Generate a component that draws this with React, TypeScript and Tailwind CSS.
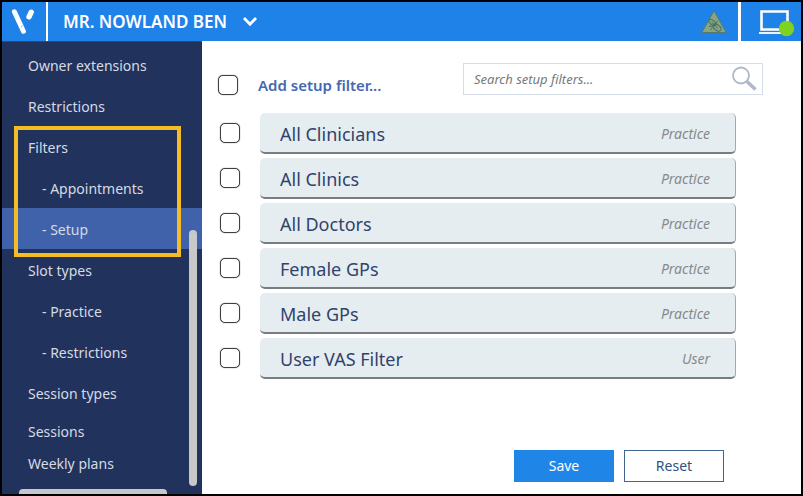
import clsx from 'clsx'

const menu = [
  {label: 'Owner extensions'},
  {label: 'Restrictions'},
  {label: 'Filters', group: true},
  {label: 'Slot types'},
  {label: '- Practice', sub: true},
  {label: '- Restrictions', sub: true},
  {label: 'Session types'},
  {label: 'Sessions', height: 'h-9'},
  {label: 'Weekly plans', height: 'h-7'},
]

const filters = [
  {name: 'All Clinicians', scope: 'Practice'},
  {name: 'All Clinics', scope: 'Practice'},
  {name: 'All Doctors', scope: 'Practice'},
  {name: 'Female GPs', scope: 'Practice'},
  {name: 'Male GPs', scope: 'Practice'},
  {name: 'User VAS Filter', scope: 'User'},
]

interface MenuLinkProps {
  label: string
  sub?: boolean
  active?: boolean
  height?: string
}

const MenuLink = ({label, sub, active, height = 'h-[41px]'}: MenuLinkProps) => (
  <a
    href="#"
    className={clsx(
      'flex items-center pt-0.5 whitespace-nowrap text-[#d5dae4]',
      height,
      sub ? 'pl-10' : 'pl-[26px]',
      active && 'bg-[#3f62ab]',
    )}
  >
    {label}
  </a>
)

const Checkbox = ({label}: {label: string}) => (
  <input
    type="checkbox"
    aria-label={label}
    className="size-5 shrink-0 appearance-none rounded-[5px] border border-[#404040] bg-white shadow-[0_0_1px_#404040] checked:bg-[#3f62ab]"
  />
)

const Header = () => (
  <header className="flex h-[39px] items-stretch bg-[#1f82e8] text-white">
    <div className="flex w-[46px] items-center border-r-2 border-white pl-2">
      <svg width="26" height="28" viewBox="0 0 26 28" fill="none" stroke="#fff" strokeLinecap="round">
        <path d="M4.4 3.8 13.4 23.2" strokeWidth="5" />
        <path d="M21.2 4.2 19 8.8" strokeWidth="5.4" />
        <path d="M11.3 18.8 13.6 17.2" stroke="#8dbdf2" strokeWidth="1" />
      </svg>
    </div>
    <button className="flex items-center gap-4 pl-[15px] text-[17px] font-semibold whitespace-nowrap">
      MR. NOWLAND BEN
      <svg width="14" height="11" viewBox="0 0 14 11" fill="none" stroke="#fff" strokeWidth="2.8">
        <path d="m1 2 6 6.3L13 2" />
      </svg>
    </button>
    <div className="ml-auto flex items-center border-r-3 border-white pr-[11px]">
      <svg width="26" height="24" viewBox="0 0 26 24" fill="none">
        <path d="M13 .8 25.2 22.5H.8Z" fill="#88a582" stroke="#57786f" strokeLinejoin="round" />
        <g stroke="#456c68" strokeWidth="1">
          <ellipse cx="11.3" cy="12.5" rx="4" ry="2.2" transform="rotate(40 11.3 12.5)" />
          <ellipse cx="16" cy="17.5" rx="4.6" ry="2.7" transform="rotate(40 16 17.5)" />
          <path d="m10.5 12 6.5 6.3M8 16.5l3.5-.5M9.5 20l2-2.5M15 13.5l1.5-2.5" />
        </g>
      </svg>
    </div>
    <div className="flex w-[60px] items-center pl-4">
      <svg width="40" height="30" viewBox="0 0 40 30" fill="none">
        <path d="M4.5 4.5h26v18h-26z" stroke="#fff" strokeWidth="2.6" />
        <path d="M2 26h29" stroke="#fff" strokeWidth="1.8" />
        <circle cx="29.5" cy="21.5" r="7.7" fill="#7ed321" />
      </svg>
    </div>
  </header>
)

const Sidebar = () => (
  <nav className="relative flex w-[200px] shrink-0 flex-col border-t border-[#2b4a85] bg-[#21335c] pt-0.5 text-sm">
    {menu.map(item =>
      item.group ? (
        <div key={item.label} className="relative">
          <MenuLink label={item.label} />
          <MenuLink label="- Appointments" sub />
          <MenuLink label="- Setup" sub active />
          <div className="pointer-events-none absolute top-0 right-[21px] -bottom-2 left-3 border-4 border-[#f6bc25]" />
        </div>
      ) : (
        <MenuLink key={item.label} label={item.label} sub={item.sub} height={item.height} />
      ),
    )}
    <div className="absolute right-[5px] bottom-2 h-64 w-2 rounded-sm bg-[#c8c8ca]" />
    <div className="mt-auto mr-[35px] ml-[17px] h-[5px] rounded-t-sm bg-[#c8c8ca]" />
  </nav>
)

const FilterRow = ({name, scope}: {name: string; scope: string}) => (
  <li className="flex items-center gap-5">
    <Checkbox label={name} />
    <button className="flex h-[41px] flex-1 items-center justify-between rounded-[5px] border-r border-b-2 border-r-[#a3a9ac] border-b-[#777d80] bg-[#e6edf0] pt-1 pr-[25px] pl-5">
      <span className="text-lg text-[#30436d]">{name}</span>
      <span className="text-sm text-[#858a8d] italic">{scope}</span>
    </button>
  </li>
)

export default function App() {
  return (
    <div className="flex min-h-screen flex-col border-2 border-black bg-white font-['Noto_Sans','Open_Sans',sans-serif]">
      <Header />
      <div className="flex flex-1">
        <Sidebar />
        <main className="flex flex-1 flex-col pt-[22px] pb-3 pl-4">
          <div className="flex items-start pr-[38px]">
            <div className="flex flex-1 items-center gap-5 pt-[11px]">
              <Checkbox label="Select all filters" />
              <a href="#" className="text-[15px] font-semibold whitespace-nowrap text-[#4568b2]">
                Add setup filter...
              </a>
            </div>
            <label className="flex h-8 w-[300px] items-center border border-[#d5dde8] pr-1 pl-2.5">
              <input
                type="text"
                aria-label="Search setup filters"
                placeholder="Search setup filters..."
                className="min-w-0 flex-1 pt-0.5 text-[13px] italic outline-none placeholder:text-[#77797c]"
              />
              <svg width="28" height="28" viewBox="0 0 28 28" fill="none" stroke="#aeb8ca">
                <circle cx="11" cy="10.5" r="8" strokeWidth="1.8" />
                <path d="m17 16.5 8.5 8" strokeWidth="3.6" />
              </svg>
            </label>
          </div>
          <ul className="mt-4 flex flex-col gap-1 pr-[65px] pl-0.5">
            {filters.map(filter => (
              <FilterRow key={filter.name} {...filter} />
            ))}
          </ul>
          <div className="mt-auto flex justify-end gap-2.5 pr-[77px] text-sm">
            <button className="h-8 w-[100px] bg-[#1f86e8] text-white">Save</button>
            <button className="h-8 w-[100px] border border-[#416591] bg-white text-[#30527f]">Reset</button>
          </div>
        </main>
      </div>
    </div>
  )
}
